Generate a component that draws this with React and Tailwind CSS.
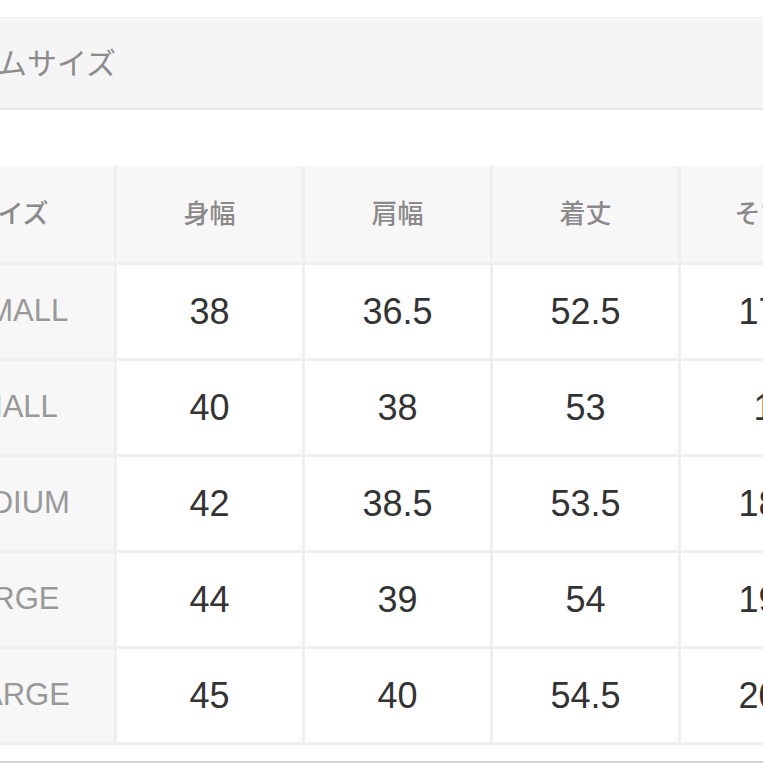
const cols = ["身幅", "肩幅", "着丈", "そで丈"];

const rows = [
  { size: "XSMALL", values: ["38", "36.5", "52.5", "17.5"] },
  { size: "SMALL", values: ["40", "38", "53", "18"] },
  { size: "MEDIUM", values: ["42", "38.5", "53.5", "18.5"] },
  { size: "LARGE", values: ["44", "39", "54", "19.5"] },
  { size: "XLARGE", values: ["45", "40", "54.5", "20.5"] },
];

const font = { fontFamily: '"Liberation Sans", "Noto Sans CJK JP", sans-serif' };

export default function App() {
  return (
    <div className="h-[763px] w-[763px] overflow-hidden bg-white" style={font}>
      {/* page is cropped on the left, so the content starts off-screen */}
      <div className="-ml-[94px] w-[1100px] pt-[17px]">
        <div className="box-border flex h-[93px] items-center border-t border-b-2 border-t-[#efefef] border-b-[#e8e8e8] bg-[#f5f5f5] pl-[4px] text-[30px] text-[#8c8c8c]">
          アイテムサイズ
        </div>

        <div className="mt-[56px] grid grid-cols-[208px_repeat(5,185px)] grid-rows-[96px_repeat(5,93px)] gap-[3px] bg-[#efefef] pb-[3px]">
          <div className="flex items-center justify-center bg-[#f7f7f7] text-[26px] font-medium text-[#8a8a8a]">
            サイズ
          </div>
          {cols.map((c) => (
            <div key={c} className="flex items-center justify-center bg-[#f7f7f7] text-[26px] font-medium text-[#8a8a8a]">
              {c}
            </div>
          ))}
          <div className="bg-[#f7f7f7]" />

          {rows.map((r) => (
            <Row key={r.size} row={r} />
          ))}
        </div>

        <div className="mt-[16px] h-[3px] bg-[#d2d2d2]" />
      </div>
    </div>
  );
}

function Row({ row }) {
  return (
    <>
      <div className="flex items-center justify-center bg-[#f7f7f7] pr-[6px] text-[31px] text-[#999999]">
        {row.size}
      </div>
      {row.values.map((v, i) => (
        <div key={i} className="flex items-center justify-center bg-white text-[36px] text-[#333333]">
          {v}
        </div>
      ))}
      <div className="bg-white" />
    </>
  );
}
